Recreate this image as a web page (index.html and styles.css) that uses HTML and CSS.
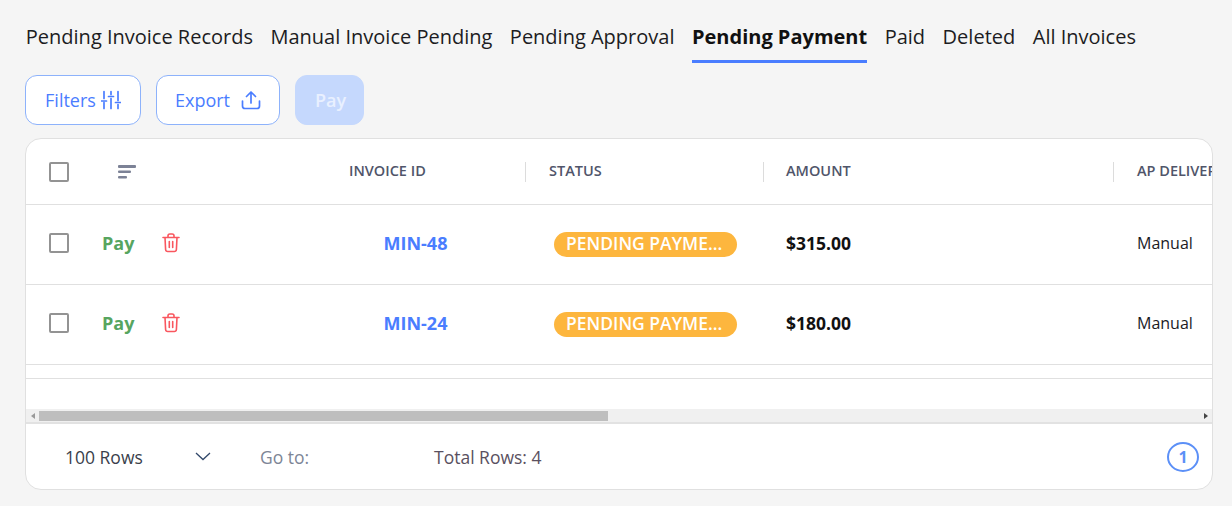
FILE: index.html
```html
<!DOCTYPE html>
<html lang="en">
<head>
  <meta charset="UTF-8">
  <title>Invoices</title>
  <link rel="stylesheet" href="styles.css">
</head>
<body>
  <nav class="tabs">
    <a class="tab">Pending Invoice Records</a>
    <a class="tab">Manual Invoice Pending</a>
    <a class="tab">Pending Approval</a>
    <a class="tab active">Pending Payment</a>
    <a class="tab">Paid</a>
    <a class="tab">Deleted</a>
    <a class="tab">All Invoices</a>
  </nav>

  <div class="toolbar">
    <button class="btn btn-filters">Filters
      <svg width="20" height="20" viewBox="0 0 20 20" fill="none" stroke="#4a7dff" stroke-width="1.7" stroke-linecap="round">
        <path d="M3 1.500v7M3 12.500v6M.5 11h5M10 1.500v3M10 8.500v10M7.500 6.500h5M17 1.500v9M17 14.500v4M14.500 12.500h5"/>
      </svg>
    </button>
    <button class="btn btn-export">Export
      <svg width="20" height="20" viewBox="0 0 20 20" fill="none" stroke="#4a7dff" stroke-width="1.7" stroke-linecap="round" stroke-linejoin="round">
        <path d="M10 13V2M5.500 6.500 10 2l4.500 4.500M1.500 11v5a2.500 2.500 0 0 0 2.500 2.500h12a2.500 2.500 0 0 0 2.500-2.500v-5"/>
      </svg>
    </button>
    <button class="btn btn-pay">Pay</button>
  </div>

  <section class="card">
    <div class="table-scroll">
      <div class="row head">
        <div class="cell c-check"><span class="checkbox"></span></div>
        <div class="cell c-actions">
          <svg class="sort-icon" width="19" height="14" viewBox="0 0 19 14" fill="#7c8296">
            <rect x="0" y="0" width="18" height="3" rx="1"/>
            <rect x="0" y="5.500" width="13" height="2.500" rx="1"/>
            <rect x="0" y="11" width="9" height="2.500" rx="1"/>
          </svg>
        </div>
        <div class="cell c-id"><span class="head-label">INVOICE ID</span></div>
        <div class="cell c-status"><span class="head-label">STATUS</span></div>
        <div class="cell c-amount"><span class="head-label">AMOUNT</span></div>
        <div class="cell c-delivery"><span class="head-label">AP DELIVERY</span></div>
      </div>

      <div class="row body-row">
        <div class="cell c-check"><span class="checkbox"></span></div>
        <div class="cell c-actions">
          <a class="pay-link">Pay</a>
          <svg class="trash" width="18" height="20" viewBox="0 0 18 20" fill="none" stroke="#f9575f" stroke-width="1.600" stroke-linecap="round" stroke-linejoin="round">
            <path d="M1 4.500h16M6 4.500V2.800C6 1.800 6.800 1 7.800 1h2.400c1 0 1.800.8 1.800 1.800v1.700M3 4.500l.6 12c.1 1.200 1 2 2.100 2h6.600c1.100 0 2-.8 2.100-2l.6-12M7.300 8.500v6M10.700 8.500v6"/>
          </svg>
        </div>
        <div class="cell c-id"><a class="invoice-link">MIN-48</a></div>
        <div class="cell c-status"><span class="badge">PENDING PAYME...</span></div>
        <div class="cell c-amount amount">$315.00</div>
        <div class="cell c-delivery">Manual</div>
      </div>

      <div class="row body-row">
        <div class="cell c-check"><span class="checkbox"></span></div>
        <div class="cell c-actions">
          <a class="pay-link">Pay</a>
          <svg class="trash" width="18" height="20" viewBox="0 0 18 20" fill="none" stroke="#f9575f" stroke-width="1.600" stroke-linecap="round" stroke-linejoin="round">
            <path d="M1 4.500h16M6 4.500V2.800C6 1.800 6.800 1 7.800 1h2.400c1 0 1.800.8 1.800 1.800v1.700M3 4.500l.6 12c.1 1.200 1 2 2.100 2h6.600c1.100 0 2-.8 2.100-2l.6-12M7.300 8.500v6M10.700 8.500v6"/>
          </svg>
        </div>
        <div class="cell c-id"><a class="invoice-link">MIN-24</a></div>
        <div class="cell c-status"><span class="badge">PENDING PAYME...</span></div>
        <div class="cell c-amount amount">$180.00</div>
        <div class="cell c-delivery">Manual</div>
      </div>

      <div class="row-thin"></div>
      <div class="table-space"></div>

      <div class="scrollbar">
        <span class="arrow arrow-left"></span>
        <div class="scroll-track"><div class="scroll-thumb"></div></div>
        <span class="arrow arrow-right"></span>
      </div>
    </div>

    <footer class="pager">
      <div class="rows-select">100 Rows
        <svg width="16" height="9" viewBox="0 0 16 9" fill="none" stroke="#33496b" stroke-width="1.300">
          <path d="M1 1l7 6.500L15 1"/>
        </svg>
      </div>
      <div class="goto">Go to:</div>
      <div class="total">Total Rows: 4</div>
      <div class="page-num">1</div>
    </footer>
  </section>
</body>
</html>
```

FILE: styles.css
```css
* {
  margin: 0;
  padding: 0;
  box-sizing: border-box;
}
html, body {
  height: 100%;
  overflow: hidden;
}
body {
  font-family: "Open Sans", "Noto Sans", sans-serif;
  background: #f5f5f5;
  color: #1b1b1f;
  padding: 0 19px 0 25px;
}

/* Tabs */
.tabs {
  display: flex;
  gap: 17.5px;
  height: 63px;
  padding: 21px 0 0 0.8px;
}
.tab {
  font-size: 20px;
  line-height: 32px;
  height: 42px;
  white-space: nowrap;
  color: #1c1c22;
}
.tab.active {
  font-weight: 700;
  color: #111;
  border-bottom: 3px solid #4a7dff;
}

/* Buttons */
.toolbar {
  display: flex;
  gap: 15px;
  margin-top: 12px;
  height: 50px;
}
.btn {
  display: flex;
  align-items: center;
  justify-content: center;
  height: 50px;
  border-radius: 12px;
  font-family: inherit;
  font-size: 18px;
  background: #fff;
  color: #4a7dff;
  border: 1px solid #8db2fb;
}
.btn-filters {
  width: 116px;
  gap: 5px;
}
.btn-export {
  width: 124px;
  gap: 11px;
}
.btn-pay {
  width: 69px;
  padding-left: 2px;
  background: #c5d8fd;
  border-color: #c5d8fd;
  color: #e9f0ff;
  font-weight: 600;
}

/* Table card */
.card {
  margin-top: 13px;
  height: 352px;
  background: #fff;
  border: 1px solid #e0e0e0;
  border-radius: 16px;
  overflow: hidden;
}
.table-scroll {
  height: 285px;
  border-bottom: 2px solid #e2e2e2;
  display: flex;
  flex-direction: column;
}
.row {
  display: flex;
  align-items: center;
  flex: none;
  height: 80px;
  border-bottom: 1px solid #e0e0e0;
  font-size: 16px;
}
.body-row {
  padding-bottom: 4px;
}
.row.head {
  height: 66px;
  font-size: 14.5px;
  font-weight: 600;
  color: #50556a;
}
.head-label {
  margin-top: -2px;
}
.row-thin {
  flex: none;
  height: 14px;
  border-bottom: 1px solid #e0e0e0;
}
.table-space {
  flex: 1;
}
.cell {
  display: flex;
  align-items: center;
  white-space: nowrap;
  height: 20px;
}
.c-check {
  width: 67px;
  padding-left: 23px;
  height: auto;
}
.c-actions {
  width: 205px;
  padding-left: 9px;
  height: auto;
}
.c-id {
  width: 227px;
  padding-left: 51px;
}
.c-status {
  width: 238px;
  padding-left: 23px;
}
.c-amount {
  width: 350px;
  padding-left: 22px;
}
.c-delivery {
  flex: 1;
  padding-left: 23px;
  overflow: hidden;
}
.body-row .c-delivery {
  padding-left: 24px;
}
.head .c-status,
.head .c-amount,
.head .c-delivery {
  border-left: 1px solid #dcdcdc;
}
.head .c-actions {
  padding-left: 25px;
}
.checkbox {
  display: block;
  width: 20px;
  height: 20px;
  border: 2px solid #939393;
  border-radius: 2px;
  background: #fff;
}
.sort-icon {
  display: block;
}
.pay-link {
  font-size: 18px;
  font-weight: 700;
  color: #57a55f;
  width: 60px;
}
.trash {
  display: block;
}
.invoice-link {
  font-size: 18px;
  font-weight: 700;
  color: #4a7dff;
  margin-left: 34.5px;
}
.badge {
  display: block;
  margin: 4px 0 0 6px;
  width: 183px;
  height: 25px;
  line-height: 23px;
  border-radius: 13px;
  background: #fdb63e;
  color: #fff;
  font-size: 17.5px;
  font-weight: 600;
  padding-left: 12px;
  overflow: hidden;
}
.amount {
  padding-left: 23px;
  font-size: 17.5px;
  font-weight: 700;
  color: #111;
}

/* Fake scrollbar */
.scrollbar {
  flex: none;
  display: flex;
  align-items: center;
  height: 13px;
  background: #f0f0f0;
}
.scroll-track {
  flex: 1;
  height: 10px;
}
.scroll-thumb {
  width: 569px;
  height: 10px;
  background: #bebebe;
}
.arrow {
  flex: none;
  width: 13px;
  display: flex;
  justify-content: center;
}
.arrow::before {
  content: "";
  border-top: 3px solid transparent;
  border-bottom: 3px solid transparent;
}
.arrow-left::before {
  border-right: 4px solid #9a9a9a;
}
.arrow-right::before {
  border-left: 4px solid #444;
}

/* Footer */
.pager {
  display: flex;
  align-items: center;
  height: 65px;
  font-size: 17.5px;
  padding: 0 13px 0 39px;
}
.rows-select {
  display: flex;
  align-items: center;
  gap: 52px;
  width: 195px;
  color: #3a3f4b;
}
.goto {
  width: 174px;
  color: #7d8596;
}
.total {
  flex: 1;
  color: #5a5060;
}
.page-num {
  width: 32px;
  height: 30px;
  border: 2px solid #5c90f7;
  border-radius: 50%;
  color: #5c90f7;
  font-size: 16px;
  font-weight: 700;
  line-height: 26px;
  text-align: center;
}
```
